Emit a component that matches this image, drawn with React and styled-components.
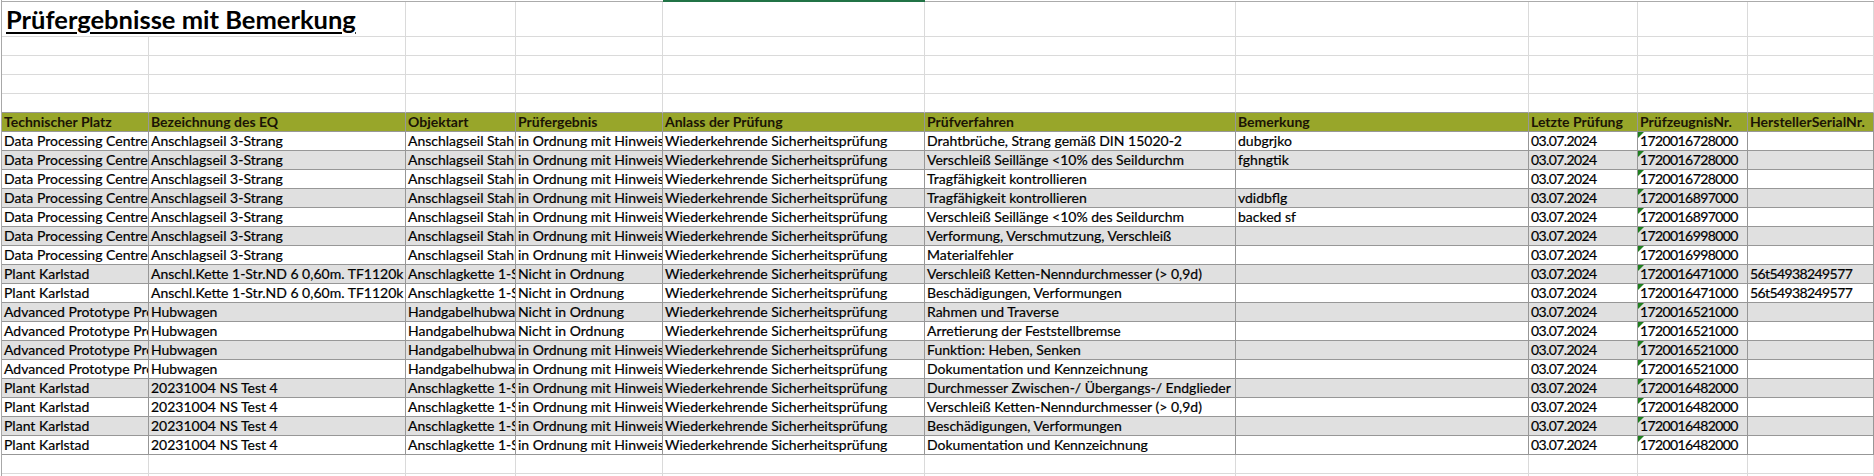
import React from 'react';
import styled, { createGlobalStyle } from 'styled-components';

// column widths in px, each includes its 1px right line
const COLS = [147, 257, 110, 147, 262, 311, 293, 109, 110, 126];
const template = COLS.map(w => `${w}px`).join(' ');

const GRID_LINE = '#dadada';
const TABLE_LINE = '#979797';

const GlobalStyle = createGlobalStyle`
  html, body {
    margin: 0;
    padding: 0;
    background: #ffffff;
  }
  body {
    font-family: Lato, "Liberation Sans", sans-serif;
    color: #000;
  }
`;

const Sheet = styled.div`
  width: 1874px;
  height: 476px;
  overflow: hidden;
  box-sizing: border-box;
  padding-left: 1px;
`;

const Grid = styled.div`
  border-left: 1px solid #a8a8a8;
`;

const ColumnEdge = styled.div`
  display: grid;
  grid-template-columns: ${template};
  height: 2px;
`;

const EdgeSegment = styled.div`
  box-sizing: border-box;
  background: ${p => (p.$active ? '#217346' : '#ffffff')};
  border-bottom: ${p => (p.$active ? '0' : '1px solid #ababab')};
`;

const Row = styled.div`
  display: grid;
  grid-template-columns: ${template};
  height: ${p => p.$height || 19}px;
  background: ${p => (p.$shade ? '#e0e0e0' : 'transparent')};
`;

const BlankCell = styled.div`
  box-sizing: border-box;
  border-right: 1px solid ${GRID_LINE};
  border-bottom: 1px solid ${p => (p.$edge ? TABLE_LINE : GRID_LINE)};
`;

const TitleCell = styled.div`
  grid-column: span 2;
  box-sizing: border-box;
  border-right: 1px solid ${GRID_LINE};
  border-bottom: 1px solid ${GRID_LINE};
  padding: 0 0 0 4px;
  font-size: 25.5px;
  font-weight: 700;
  line-height: 34px;
  white-space: nowrap;
  text-decoration: underline;
  text-decoration-thickness: 2px;
  text-underline-offset: 3px;
`;

const HeadCell = styled.div`
  box-sizing: border-box;
  background: #98a62a;
  border-right: 1px solid ${TABLE_LINE};
  border-bottom: 1px solid ${TABLE_LINE};
  padding: 0 2px;
  font-size: 14px;
  font-weight: 700;
  line-height: 18px;
  color: #1b1405;
  white-space: nowrap;
  overflow: ${p => (p.$spill ? 'visible' : 'hidden')};
`;

const DataCell = styled.div`
  position: relative;
  box-sizing: border-box;
  border-right: 1px solid ${TABLE_LINE};
  border-bottom: 1px solid ${TABLE_LINE};
  padding: 0 2px;
  font-size: 14px;
  line-height: 18px;
  letter-spacing: ${p => (p.$digits ? '-0.6px' : '0')};
  -webkit-text-stroke: 0.2px #000;
  white-space: nowrap;
  overflow: hidden;

  ${p => p.$flag && `
    &::before {
      content: '';
      position: absolute;
      top: 0;
      left: 0;
      border-top: 6px solid #1f7f1f;
      border-right: 6px solid transparent;
    }
  `}
`;

const headers = [
  'Technischer Platz',
  'Bezeichnung des EQ',
  'Objektart',
  'Prüfergebnis',
  'Anlass der Prüfung',
  'Prüfverfahren',
  'Bemerkung',
  'Letzte Prüfung',
  'PrüfzeugnisNr.',
  'HerstellerSerialNr.',
];

const DPC = 'Data Processing Centre';
const APP = 'Advanced Prototype Production';
const PK = 'Plant Karlstad';
const SEIL = 'Anschlagseil 3-Strang';
const SEIL_ART = 'Anschlagseil Stahldraht';
const KETTE = 'Anschl.Kette 1-Str.ND 6 0,60m. TF1120k';
const KETTE_ART = 'Anschlagkette 1-Strang';
const HUB = 'Hubwagen';
const HUB_ART = 'Handgabelhubwagen';
const TEST = '20231004 NS Test 4';
const OK_H = 'in Ordnung mit Hinweis';
const NOK = 'Nicht in Ordnung';
const WSP = 'Wiederkehrende Sicherheitsprüfung';
const DATE = '03.07.2024';

const rows = [
  [DPC, SEIL, SEIL_ART, OK_H, WSP, 'Drahtbrüche, Strang gemäß DIN 15020-2', 'dubgrjko', DATE, '1720016728000', ''],
  [DPC, SEIL, SEIL_ART, OK_H, WSP, 'Verschleiß Seillänge <10% des Seildurchm', 'fghngtik', DATE, '1720016728000', ''],
  [DPC, SEIL, SEIL_ART, OK_H, WSP, 'Tragfähigkeit kontrollieren', '', DATE, '1720016728000', ''],
  [DPC, SEIL, SEIL_ART, OK_H, WSP, 'Tragfähigkeit kontrollieren', 'vdidbflg', DATE, '1720016897000', ''],
  [DPC, SEIL, SEIL_ART, OK_H, WSP, 'Verschleiß Seillänge <10% des Seildurchm', 'backed sf', DATE, '1720016897000', ''],
  [DPC, SEIL, SEIL_ART, OK_H, WSP, 'Verformung, Verschmutzung, Verschleiß', '', DATE, '1720016998000', ''],
  [DPC, SEIL, SEIL_ART, OK_H, WSP, 'Materialfehler', '', DATE, '1720016998000', ''],
  [PK, KETTE, KETTE_ART, NOK, WSP, 'Verschleiß Ketten-Nenndurchmesser (> 0,9d)', '', DATE, '1720016471000', '56t54938249577'],
  [PK, KETTE, KETTE_ART, NOK, WSP, 'Beschädigungen, Verformungen', '', DATE, '1720016471000', '56t54938249577'],
  [APP, HUB, HUB_ART, NOK, WSP, 'Rahmen und Traverse', '', DATE, '1720016521000', ''],
  [APP, HUB, HUB_ART, NOK, WSP, 'Arretierung der Feststellbremse', '', DATE, '1720016521000', ''],
  [APP, HUB, HUB_ART, OK_H, WSP, 'Funktion: Heben, Senken', '', DATE, '1720016521000', ''],
  [APP, HUB, HUB_ART, OK_H, WSP, 'Dokumentation und Kennzeichnung', '', DATE, '1720016521000', ''],
  [PK, TEST, KETTE_ART, OK_H, WSP, 'Durchmesser Zwischen-/ Übergangs-/ Endglieder', '', DATE, '1720016482000', ''],
  [PK, TEST, KETTE_ART, OK_H, WSP, 'Verschleiß Ketten-Nenndurchmesser (> 0,9d)', '', DATE, '1720016482000', ''],
  [PK, TEST, KETTE_ART, OK_H, WSP, 'Beschädigungen, Verformungen', '', DATE, '1720016482000', ''],
  [PK, TEST, KETTE_ART, OK_H, WSP, 'Dokumentation und Kennzeichnung', '', DATE, '1720016482000', ''],
];

const SELECTED_COL = 4;
const NUMBER_AS_TEXT_COL = 8;
const DIGIT_COLS = [7, 8, 9];

function BlankRow({ edge, height }) {
  return (
    <Row $height={height}>
      {COLS.map((_, i) => (
        <BlankCell key={i} $edge={edge} />
      ))}
    </Row>
  );
}

export default function App() {
  return (
    <>
      <GlobalStyle />
      <Sheet>
        <Grid>
          <ColumnEdge>
            {COLS.map((_, i) => (
              <EdgeSegment key={i} $active={i === SELECTED_COL} />
            ))}
          </ColumnEdge>

          <Row $height={35}>
            <TitleCell>Prüfergebnisse mit Bemerkung</TitleCell>
            {COLS.slice(2).map((_, i) => (
              <BlankCell key={i} />
            ))}
          </Row>

          <BlankRow />
          <BlankRow />
          <BlankRow />
          <BlankRow edge />

          <Row>
            {headers.map((h, i) => (
              <HeadCell key={h} $spill={i === headers.length - 1}>{h}</HeadCell>
            ))}
          </Row>

          {rows.map((r, ri) => (
            <Row key={ri} $shade={ri % 2 === 1}>
              {r.map((v, ci) => (
                <DataCell
                  key={ci}
                  $flag={ci === NUMBER_AS_TEXT_COL}
                  $digits={DIGIT_COLS.includes(ci)}
                >
                  {v}
                </DataCell>
              ))}
            </Row>
          ))}

          <BlankRow />
          <BlankRow />
        </Grid>
      </Sheet>
    </>
  );
}
